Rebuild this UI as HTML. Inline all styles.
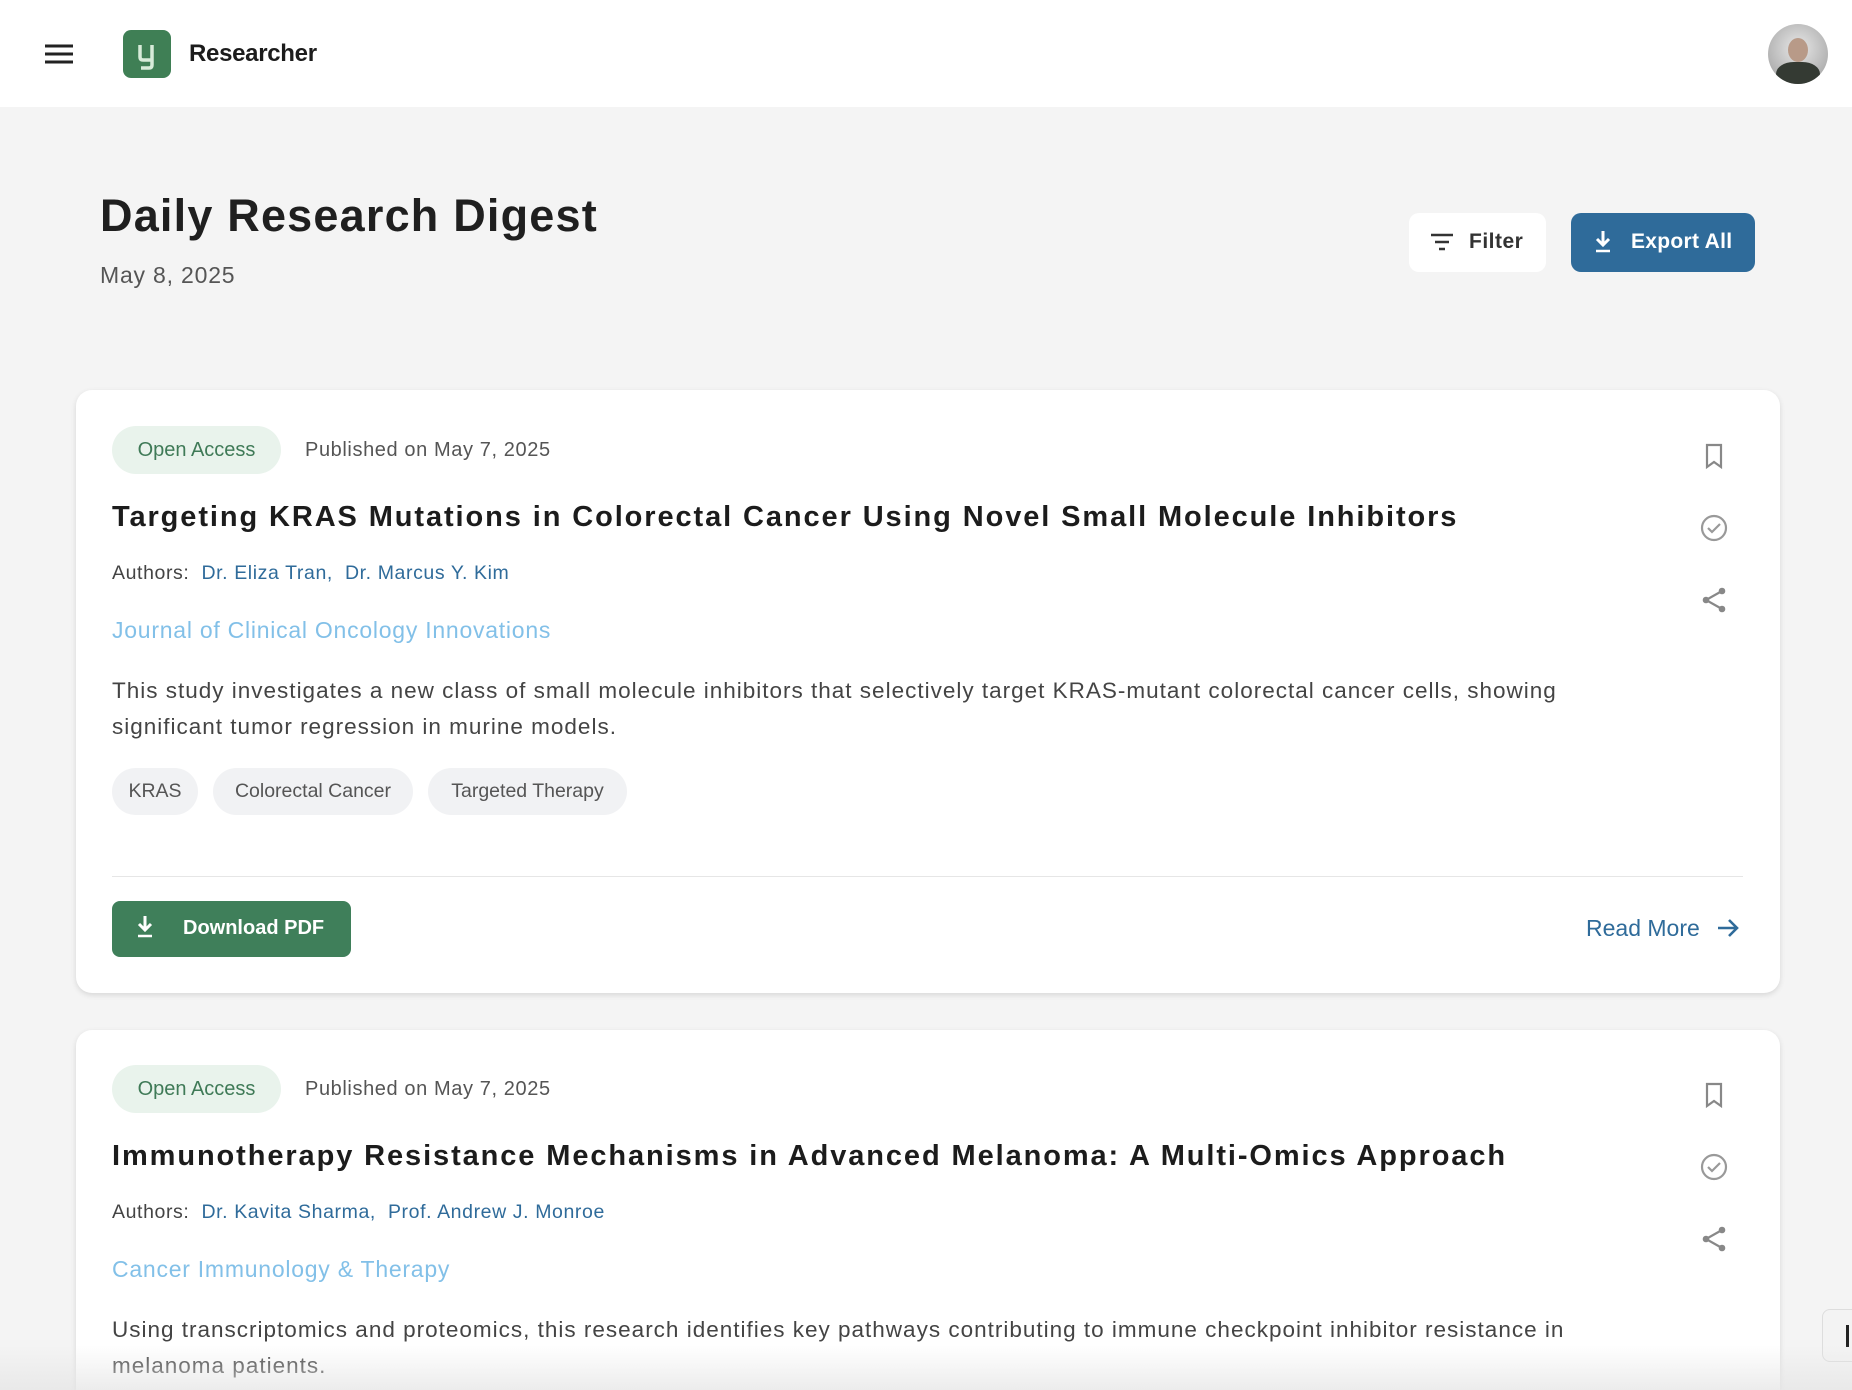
<!DOCTYPE html>
<html><head><meta charset="utf-8"><style>
*{margin:0;padding:0;box-sizing:border-box}
html{width:1852px;height:1390px;overflow:hidden}
body{width:1852px;height:1390px;overflow:hidden;background:#f4f4f4;font-family:"Liberation Sans",sans-serif;position:relative;color:#222}
.a{position:absolute;white-space:nowrap}
.hdr{position:absolute;left:0;top:0;width:1852px;height:107px;background:#fff}
.card{position:absolute;left:76px;width:1704px;background:#fff;border-radius:16px;box-shadow:0 2px 6px rgba(0,0,0,.12)}
.badge{position:absolute;left:36px;height:48px;width:169px;border-radius:24px;background:#e9f3ec;color:#3f7a57;font-size:20px;line-height:48px;text-align:center}
.pub{font-size:20px;color:#555;left:229px;letter-spacing:0.6px}
.title{left:36px;font-size:29px;font-weight:bold;color:#1c1c1c;letter-spacing:1.9px}
.auth{left:36px;font-size:19.5px;color:#444;letter-spacing:0.6px}
.auth span{color:#2f6b9a}
.jour{left:36px;font-size:23px;color:#82c0e8;letter-spacing:0.75px}
.desc{left:36px;font-size:22.5px;color:#444;line-height:36px;letter-spacing:1px}
.tag{position:absolute;top:378px;height:47px;border-radius:24px;background:#f1f2f4;color:#555;font-size:19.5px;line-height:47px;text-align:center}
.ic{position:absolute;left:1624px;width:28px;height:28px}
</style></head><body>
<div class="hdr">
  <svg class="a" style="left:45px;top:44px" width="28" height="20" viewBox="0 0 28 20"><path d="M0 2h28M0 10h28M0 18h28" stroke="#222" stroke-width="3"/></svg>
  <div class="a" style="left:123px;top:30px;width:48px;height:48px;border-radius:8px;background:#3f7f55"></div>
  <svg class="a" style="left:123px;top:30px" width="48" height="48" viewBox="0 0 48 48"><path d="M17 15v12q0 3 3 3h9M29 15v20q0 3-3 3h-8" stroke="#d7ecd9" stroke-width="3.5" fill="none"/></svg>
  <div class="a" style="left:189px;top:40px;font-size:24px;font-weight:bold;color:#1c1c1c;letter-spacing:-0.3px">Researcher</div>
  <div class="a" style="left:1768px;top:24px;width:60px;height:60px;border-radius:50%;background:radial-gradient(circle at 50% 40%,#e8e8e8,#9a9a9a);overflow:hidden">
    <div style="position:absolute;left:20px;top:14px;width:20px;height:24px;border-radius:50%;background:#b89a88"></div>
    <div style="position:absolute;left:8px;top:38px;width:44px;height:30px;border-radius:40% 40% 0 0;background:#343a33"></div>
  </div>
</div>
<div class="a" style="left:100px;top:190px;font-size:45px;font-weight:bold;color:#1f1f1f;letter-spacing:1.2px">Daily Research Digest</div>
<div class="a" style="left:100px;top:262px;font-size:23px;color:#555;letter-spacing:0.8px">May 8, 2025</div>
<div class="a" style="left:1409px;top:213px;width:137px;height:59px;background:#fff;border-radius:10px"></div>
<svg class="a" style="left:1430px;top:233px" width="24" height="18" viewBox="0 0 24 18"><path d="M1 2h22M5 9h14M9 16h6" stroke="#333" stroke-width="2.4"/></svg>
<div class="a" style="left:1469px;top:230px;font-size:21px;font-weight:bold;color:#333;letter-spacing:0.5px">Filter</div>
<div class="a" style="left:1571px;top:213px;width:184px;height:59px;background:#2f6b9a;border-radius:10px"></div>
<svg class="a" style="left:1593px;top:230px" width="20" height="24" viewBox="0 0 20 24"><path d="M10 1v13M4 9l6 6 6-6" stroke="#fff" stroke-width="3" fill="none"/><path d="M3 21h14" stroke="#fff" stroke-width="2.5"/></svg>
<div class="a" style="left:1631px;top:230px;font-size:21px;font-weight:bold;color:#fff;letter-spacing:0.3px">Export All</div>

<div class="card" style="top:390px;height:603px">
  <div class="badge" style="top:36px">Open Access</div>
  <div class="a pub" style="top:49px">Published on May 7, 2025</div>
  <div class="a title" style="top:111px">Targeting KRAS Mutations in Colorectal Cancer Using Novel Small Molecule Inhibitors</div>
  <div class="a auth" style="top:172px">Authors:&nbsp; <span>Dr. Eliza Tran,&nbsp; Dr. Marcus Y. Kim</span></div>
  <div class="a jour" style="top:227px">Journal of Clinical Oncology Innovations</div>
  <div class="a desc" style="top:283px">This study investigates a new class of small molecule inhibitors that selectively target KRAS-mutant colorectal cancer cells, showing<br>significant tumor regression in murine models.</div>
  <div class="tag" style="left:36px;width:86px">KRAS</div>
  <div class="tag" style="left:137px;width:200px">Colorectal Cancer</div>
  <div class="tag" style="left:352px;width:199px">Targeted Therapy</div>
  <div class="a" style="left:36px;top:486px;width:1631px;height:1px;background:#e6e6e6"></div>
  <div class="a" style="left:36px;top:511px;width:239px;height:56px;background:#3f7f5a;border-radius:8px"></div>
  <svg class="a" style="left:59px;top:525px" width="20" height="24" viewBox="0 0 20 24"><path d="M10 1v13M4 9l6 6 6-6" stroke="#fff" stroke-width="3" fill="none"/><path d="M3 21h14" stroke="#fff" stroke-width="2.5"/></svg>
  <div class="a" style="left:107px;top:527px;font-size:20px;font-weight:bold;color:#fff">Download PDF</div>
  <div class="a" style="left:1510px;top:525px;font-size:23px;color:#2f6b9a">Read More</div>
  <svg class="a" style="left:1640px;top:527px" width="24" height="22" viewBox="0 0 24 22"><path d="M2 11h19M13 3l8 8-8 8" stroke="#2f6b9a" stroke-width="2.6" fill="none"/></svg>
  <svg class="ic" style="top:52px" viewBox="0 0 28 28"><path d="M7 3h14v22l-7-5-7 5z" stroke="#888" stroke-width="2.2" fill="none"/></svg>
  <svg class="ic" style="top:124px" viewBox="0 0 28 28"><circle cx="14" cy="14" r="12" stroke="#999" stroke-width="2.2" fill="none"/><path d="M8 14l4 4 8-8" stroke="#999" stroke-width="2.2" fill="none"/></svg>
  <svg class="ic" style="top:196px" viewBox="0 0 28 28"><path d="M22 5L6 14l16 9" stroke="#888" stroke-width="2.2" fill="none"/><circle cx="22" cy="5" r="3.3" fill="#888"/><circle cx="6" cy="14" r="3.3" fill="#888"/><circle cx="22" cy="23" r="3.3" fill="#888"/></svg>
</div>

<div class="card" style="top:1030px;height:360px;border-radius:16px 16px 0 0">
  <div class="badge" style="top:35px">Open Access</div>
  <div class="a pub" style="top:48px">Published on May 7, 2025</div>
  <div class="a title" style="top:110px">Immunotherapy Resistance Mechanisms in Advanced Melanoma: A Multi-Omics Approach</div>
  <div class="a auth" style="top:171px">Authors:&nbsp; <span>Dr. Kavita Sharma,&nbsp; Prof. Andrew J. Monroe</span></div>
  <div class="a jour" style="top:226px">Cancer Immunology &amp; Therapy</div>
  <div class="a desc" style="top:282px">Using transcriptomics and proteomics, this research identifies key pathways contributing to immune checkpoint inhibitor resistance in<br>melanoma patients.</div>
  <svg class="ic" style="top:51px" viewBox="0 0 28 28"><path d="M7 3h14v22l-7-5-7 5z" stroke="#888" stroke-width="2.2" fill="none"/></svg>
  <svg class="ic" style="top:123px" viewBox="0 0 28 28"><circle cx="14" cy="14" r="12" stroke="#999" stroke-width="2.2" fill="none"/><path d="M8 14l4 4 8-8" stroke="#999" stroke-width="2.2" fill="none"/></svg>
  <svg class="ic" style="top:195px" viewBox="0 0 28 28"><path d="M22 5L6 14l16 9" stroke="#888" stroke-width="2.2" fill="none"/><circle cx="22" cy="5" r="3.3" fill="#888"/><circle cx="6" cy="14" r="3.3" fill="#888"/><circle cx="22" cy="23" r="3.3" fill="#888"/></svg>
</div>
<div class="a" style="left:1822px;top:1309px;width:40px;height:53px;background:#f3f3f3;border:1px solid #ddd;border-radius:8px"></div>
<div class="a" style="left:1846px;top:1325px;width:3px;height:22px;background:#222"></div>
<div class="a" style="left:0;top:1345px;width:1852px;height:45px;background:linear-gradient(rgba(235,235,235,0),rgba(228,228,228,.7))"></div>
</body></html>
